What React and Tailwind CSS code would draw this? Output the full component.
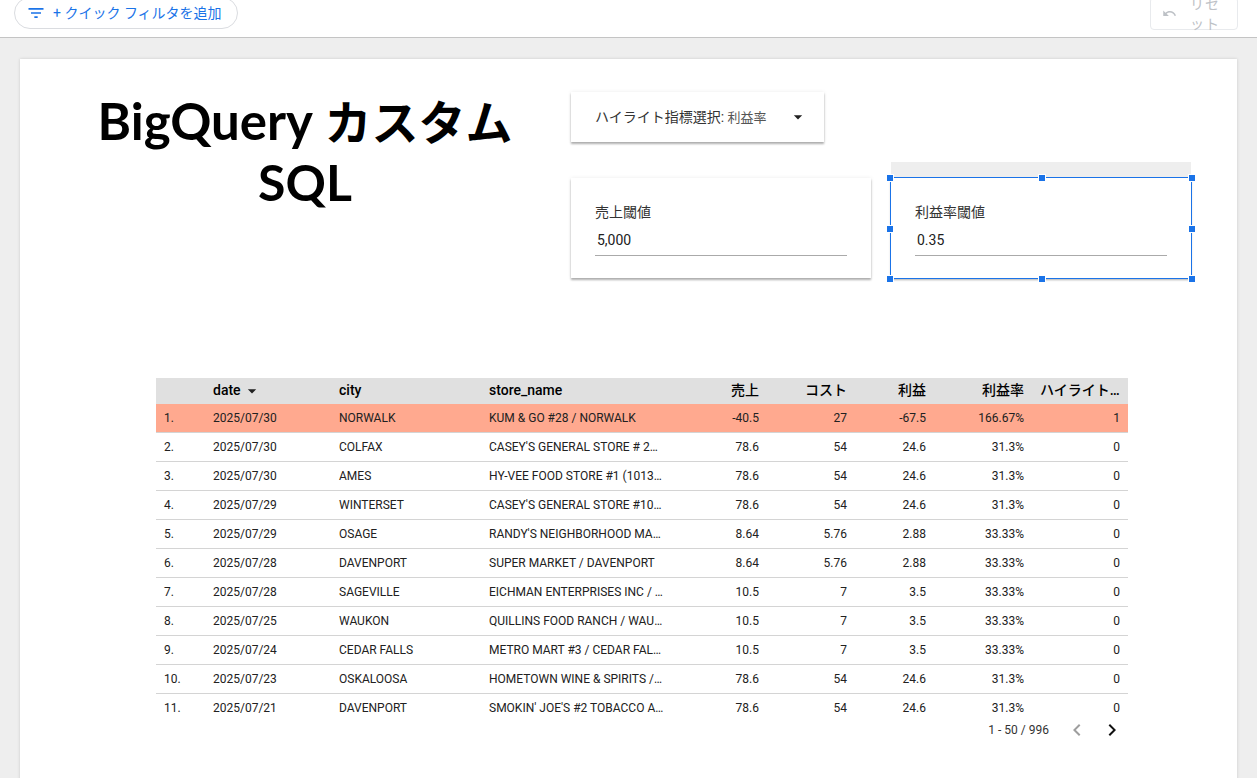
const rows = [
  ['1.', '2025/07/30', 'NORWALK', 'KUM & GO #28 / NORWALK', '-40.5', '27', '-67.5', '166.67%', '1'],
  ['2.', '2025/07/30', 'COLFAX', "CASEY'S GENERAL STORE # 2358 / COLFAX", '78.6', '54', '24.6', '31.3%', '0'],
  ['3.', '2025/07/30', 'AMES', 'HY-VEE FOOD STORE #1 (1013) / AMES', '78.6', '54', '24.6', '31.3%', '0'],
  ['4.', '2025/07/29', 'WINTERSET', "CASEY'S GENERAL STORE #1054 / WINTERSET", '78.6', '54', '24.6', '31.3%', '0'],
  ['5.', '2025/07/29', 'OSAGE', "RANDY'S NEIGHBORHOOD MARKET / OSAGE", '8.64', '5.76', '2.88', '33.33%', '0'],
  ['6.', '2025/07/28', 'DAVENPORT', 'SUPER MARKET / DAVENPORT', '8.64', '5.76', '2.88', '33.33%', '0'],
  ['7.', '2025/07/28', 'SAGEVILLE', 'EICHMAN ENTERPRISES INC / SAGEVILLE', '10.5', '7', '3.5', '33.33%', '0'],
  ['8.', '2025/07/25', 'WAUKON', 'QUILLINS FOOD RANCH / WAUKON', '10.5', '7', '3.5', '33.33%', '0'],
  ['9.', '2025/07/24', 'CEDAR FALLS', 'METRO MART #3 / CEDAR FALLS', '10.5', '7', '3.5', '33.33%', '0'],
  ['10.', '2025/07/23', 'OSKALOOSA', 'HOMETOWN WINE & SPIRITS / OSKALOOSA', '78.6', '54', '24.6', '31.3%', '0'],
  ['11.', '2025/07/21', 'DAVENPORT', "SMOKIN' JOE'S #2 TOBACCO AND LIQUOR / DAVENPORT", '78.6', '54', '24.6', '31.3%', '0'],
]

const cardShadow = 'shadow-[0_2px_2px_rgba(0,0,0,0.3),0_0_4px_rgba(0,0,0,0.08)]'
const cell = 'px-2 truncate'
const num = 'px-2 truncate text-right'

function Handle({ className }) {
  return <span className={`absolute w-[8px] h-[8px] bg-[#1a73e8] border border-white ${className}`} />
}

function NumberCard({ label, value, selected }) {
  return (
    <div className={`relative w-[300px] h-[100px] bg-white pt-[24px] px-[24px] ${cardShadow}`}>
      <div className="text-[14px] leading-[20px] text-[#333]">{label}</div>
      <div className="mt-[8px] h-[20px] px-[2px] text-[14px] leading-[20px] text-[#212121] border-b border-[#aaa] box-content pb-[5px]">
        {value}
      </div>
      {selected && (
        <>
          <div className="absolute left-0 right-0 -top-[16px] h-[16px] bg-[#eee]" />
          <div className="absolute -left-px -right-px -top-px -bottom-px border border-[#1a73e8]" />
          <Handle className="-left-[5px] -top-[4px]" />
          <Handle className="left-[147px] -top-[4px]" />
          <Handle className="-right-[5px] -top-[4px]" />
          <Handle className="-left-[5px] top-[47px]" />
          <Handle className="-right-[5px] top-[47px]" />
          <Handle className="-left-[5px] -bottom-[5px]" />
          <Handle className="left-[147px] -bottom-[5px]" />
          <Handle className="-right-[5px] -bottom-[5px]" />
        </>
      )}
    </div>
  )
}

export default function App() {
  return (
    <div className="h-screen overflow-hidden bg-[#eee] font-['Roboto','Noto_Sans_CJK_JP',sans-serif]">
      {/* Top toolbar */}
      <div className="h-[38px] bg-white border-b border-[#c4c4c4] flex justify-between overflow-hidden">
        <button className="ml-[14px] -mt-[3px] w-[224px] h-[32px] rounded-full border border-[#dadce0] flex items-center pl-[11px] text-[14px] text-[#1a73e8]">
          <svg width="20" height="20" viewBox="0 0 24 24" fill="currentColor">
            <path d="M10 18h4v-2h-4v2zM3 6v2h18V6H3zm3 7h12v-2H6v2z" />
          </svg>
          <span className="ml-[7px]">+ クイック フィルタを追加</span>
        </button>
        <button className="mr-[19px] -mt-[3px] w-[88px] h-[33px] rounded-[4px] border border-[#e8eaed] flex items-center pl-[11px] text-[14px] leading-[20px] text-[#bdc1c6]">
          <svg width="15" height="15" viewBox="0 0 24 24" fill="currentColor">
            <path d="M12.5 8c-2.65 0-5.05.99-6.9 2.6L2 7v9h9l-3.62-3.62c1.39-1.16 3.16-1.88 5.12-1.88 3.54 0 6.55 2.31 7.6 5.5l2.37-.78C21.08 11.03 17.15 8 12.5 8z" />
          </svg>
          <span className="ml-[13px] w-[31px] tracking-[1px] text-left">リセット</span>
        </button>
      </div>

      {/* Report canvas */}
      <div className="mx-[20px] mt-[21px] h-[800px] bg-white pt-[33px] shadow-[0_0_3px_rgba(0,0,0,0.15)]">
        <div className="flex">
          <h1 className="w-[551px] pl-[60px] pr-[41px] -mt-[1px] text-center text-[47px] leading-[60px] font-bold text-black font-['Lato','Noto_Sans_CJK_JP',sans-serif]">
            <span className="text-[51px]">BigQuery</span> カスタム<br />
            <span className="text-[50px]">SQL</span>
          </h1>
          <div>
            <div className={`w-[253px] h-[50px] bg-white flex items-center justify-between pl-[24px] pr-[16px] ${cardShadow}`}>
              <span className="text-[14px] text-[#333]">
                ハイライト指標選択: <span className="text-[13px] text-[#555]">利益率</span>
              </span>
              <svg width="20" height="20" viewBox="0 0 24 24" fill="#212121">
                <path d="M7 10l5 5 5-5z" />
              </svg>
            </div>
            <div className="mt-[36px] flex gap-[20px]">
              <NumberCard label="売上閾値" value="5,000" />
              <NumberCard label="利益率閾値" value="0.35" selected />
            </div>
          </div>
        </div>

        {/* Data table */}
        <div className="mt-[100px] ml-[136px] w-[972px]">
          <div className="h-[342px] overflow-hidden">
            <table className="w-full table-fixed border-separate border-spacing-0 text-[12px] text-[#212121]">
              <colgroup>
                <col className="w-[49px]" />
                <col className="w-[126px]" />
                <col className="w-[150px]" />
                <col className="w-[191px]" />
                <col className="w-[95px]" />
                <col className="w-[88px]" />
                <col className="w-[79px]" />
                <col className="w-[98px]" />
                <col className="w-[96px]" />
              </colgroup>
              <thead>
                <tr className="h-[26px] bg-[#e0e0e0] text-[14px] text-black">
                  <th />
                  <th className={`${cell} pb-[2px] text-left font-medium`}>
                    <span className="inline-flex items-center">
                      date
                      <svg className="ml-[1px] mt-[2px]" width="20" height="20" viewBox="0 0 24 24" fill="#212121">
                        <path d="M7 10l5 5 5-5z" />
                      </svg>
                    </span>
                  </th>
                  <th className={`${cell} pb-[2px] text-left font-medium`}>city</th>
                  <th className={`${cell} pb-[2px] text-left font-medium`}>store_name</th>
                  <th className={`${num} pb-[2px] font-medium`}>売上</th>
                  <th className={`${num} pb-[2px] font-medium`}>コスト</th>
                  <th className={`${num} pb-[2px] font-medium`}>利益</th>
                  <th className={`${num} pb-[2px] font-medium`}>利益率</th>
                  <th className={`${num} pb-[2px] font-medium`}>ハイライト対象</th>
                </tr>
              </thead>
              <tbody>
                {rows.map((r, i) => (
                  <tr key={r[0]} className={i === 0 ? 'bg-[#ffa98f]' : ''}>
                    {r.map((v, j) => (
                      <td key={j} className={`h-[29px] border-b border-[#d4d4d4] ${j < 4 ? cell : num}`}>{v}</td>
                    ))}
                  </tr>
                ))}
              </tbody>
            </table>
          </div>
          <div className="h-[24px] -mt-[2px] flex items-center justify-end pr-[4px] text-[12px] text-[#333]">
            <span className="mr-[16px]">1 - 50 / 996</span>
            <svg className="mr-[11px]" width="24" height="24" viewBox="0 0 24 24" fill="#9e9e9e">
              <path d="M15.41 7.41L14 6l-6 6 6 6 1.41-1.41L10.83 12z" />
            </svg>
            <svg width="24" height="24" viewBox="0 0 24 24" fill="#111">
              <path d="M10 6L8.59 7.41 13.17 12l-4.58 4.59L10 18l6-6z" />
            </svg>
          </div>
        </div>
      </div>
    </div>
  )
}
